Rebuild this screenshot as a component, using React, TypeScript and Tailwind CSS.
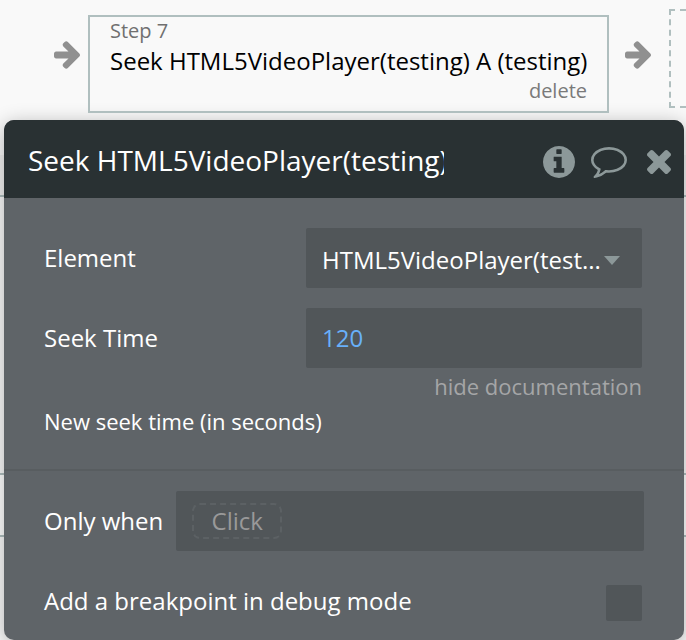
import { useState } from 'react';

const ICONS = {
  arrow: {
    box: '128 181 1472 1558',
    d: 'M1600 960q0 54-37 91l-651 651q-39 37-91 37-51 0-90-37l-75-75q-38-38-38-91t38-91l293-293h-704q-52 0-84.5-37.5t-32.5-90.5v-128q0-53 32.5-90.5t84.5-37.5h704l-293-294q-38-36-38-90t38-90l75-75q38-38 90-38 53 0 91 38l651 651q37 35 37 90z',
  },
  info: {
    box: '128 128 1536 1536',
    d: 'M1152 1376v-160q0-14-9-23t-23-9h-96v-512q0-14-9-23t-23-9h-320q-14 0-23 9t-9 23v160q0 14 9 23t23 9h96v320h-96q-14 0-23 9t-9 23v160q0 14 9 23t23 9h448q14 0 23-9t9-23zm-128-896v-160q0-14-9-23t-23-9h-192q-14 0-23 9t-9 23v160q0 14 9 23t23 9h192q14 0 23-9t9-23zm640 416q0 209-103 385.5t-279.5 279.5-385.5 103-385.5-103-279.5-279.5-103-385.5 103-385.5 279.5-279.5 385.5-103 385.5 103 279.5 279.5 103 385.5z',
  },
  comment: {
    box: '0 256 1792 1536',
    d: 'M896 384q-204 0-381.5 69.5t-282 187.5-104.5 255q0 112 71.5 213.5t201.5 175.5l87 50-27 96q-24 91-70 172 152-63 275-171l43-38 57 6q69 8 130 8 204 0 381.5-69.5t282-187.5 104.5-255-104.5-255-282-187.5-381.5-69.5zm896 512q0 174-120 321.5t-326 233-450 85.5q-70 0-145-8-198 175-460 242-49 14-114 22h-5q-15 0-27-10.5t-16-27.5v-1q-3-4-.5-12t2-10 4.5-9.5l6-9 7-8.5 8-9q7-8 31-34.5t34.5-38 31-39.5 32.5-51 27-59 26-76q-157-89-247.5-220t-90.5-281q0-174 120-321.5t326-233 450-85.5 450 85.5 326 233 120 321.5z',
  },
  close: {
    box: '302 366 1188 1188',
    d: 'M1490 1322q0 40-28 68l-136 136q-28 28-68 28t-68-28l-294-294-294 294q-28 28-68 28t-68-28l-136-136q-28-28-28-68t28-68l294-294-294-294q-28-28-28-68t28-68l136-136q28-28 68-28t68 28l294 294 294-294q28-28 68-28t68 28l136 136q28 28 28 68t-28 68l-294 294 294 294q28 28 28 68z',
  },
};

function Icon({ name, className }: { name: keyof typeof ICONS; className: string }) {
  return (
    <svg viewBox={ICONS[name].box} className={className} fill="currentColor" aria-hidden="true">
      <path d={ICONS[name].d} />
    </svg>
  );
}

export default function App() {
  const [seekTime, setSeekTime] = useState('120');
  const [condition, setCondition] = useState(false);
  const [breakpoint, setBreakpoint] = useState(false);

  return (
    <div className="relative min-h-screen overflow-hidden bg-[#f9f9f9] font-['Open_Sans',sans-serif]">
      {/* Canvas lines that run behind the editor */}
      <div className="absolute inset-x-0 top-[155px] h-[42px] border-b-2 border-[#b0bfbf] bg-[#f0f0f0]" />
      <div className="absolute inset-x-0 top-[473px] h-16 border-y-2 border-[#b0bfbf] bg-white" />

      <div className="relative">
        {/* Workflow steps */}
        <div className="flex h-[120px] items-start pt-[9px]">
          <Icon name="arrow" className="mt-8 ml-[54px] h-7 w-[26px] shrink-0 text-[#909090]" />
          <div className="mt-[6px] ml-2 flex h-[98px] min-w-0 grow flex-col border-2 border-[#b0bfbf] px-5">
            <span className="text-xl leading-7 text-[#707070]">Step 7</span>
            <span className="text-2xl leading-8 whitespace-nowrap text-black">Seek HTML5VideoPlayer(testing) A (testing)</span>
            <button className="self-end text-xl leading-7 text-[#7a7a7a]">delete</button>
          </div>
          <Icon name="arrow" className="mt-8 ml-4 h-7 w-[26px] shrink-0 text-[#909090]" />
          <div className="ml-[18px] h-[99px] w-[17px] shrink-0 border-2 border-r-0 border-dashed border-[#b0bfbf]" />
        </div>

        {/* Property editor */}
        <section className="mr-[2px] ml-1 overflow-hidden rounded-[10px] bg-[#5f6468] text-2xl text-white shadow-[0_4px_20px_rgba(0,0,0,0.3)]">
          <header className="flex h-[78px] items-center bg-[#293133] pr-[13px] pl-6 text-[#8c9899]">
            <h2 className="w-[416px] overflow-hidden pt-[2px] text-[28px] leading-10 whitespace-nowrap text-white">
              Seek HTML5VideoPlayer(testing)
            </h2>
            <div className="ml-auto flex items-center pt-[6px]">
              <button aria-label="Info">
                <Icon name="info" className="size-8" />
              </button>
              <button aria-label="Comment" className="ml-4">
                <Icon name="comment" className="h-[31px] w-9" />
              </button>
              <button aria-label="Close" className="ml-5">
                <Icon name="close" className="size-6" />
              </button>
            </div>
          </header>

          <div className="flex flex-col gap-5 pt-[30px] pr-[42px] pl-10">
            <div className="flex h-[60px] items-center">
              <label htmlFor="element" className="grow">Element</label>
              <div className="relative w-[336px]">
                <select
                  id="element"
                  className="h-[60px] w-full appearance-none truncate rounded-xs bg-[#515659] pt-1 pr-10 pl-4"
                >
                  <option>HTML5VideoPlayer(test...</option>
                </select>
                <svg viewBox="0 0 16 9" className="pointer-events-none absolute top-7 right-[22px] h-[9px] w-4 text-[#8c9899]" fill="currentColor">
                  <path d="M0 0h16L8 9z" />
                </svg>
              </div>
            </div>
            <div className="flex h-[60px] items-center">
              <label htmlFor="seek-time" className="grow">Seek Time</label>
              <input
                id="seek-time"
                type="text"
                value={seekTime}
                onChange={(e) => setSeekTime(e.target.value)}
                className="h-[60px] w-[336px] rounded-xs bg-[#515659] px-4 pb-[2px] text-[#68b0fa]"
              />
            </div>
          </div>

          <div className="flex flex-col pt-[2px] pr-[42px] pb-8 pl-10">
            <button className="self-end text-[22px] leading-8 text-[#a5a6a7]">hide documentation</button>
            <p className="mt-[3px] text-[22px] leading-8">New seek time (in seconds)</p>
          </div>

          <div className="border-t-2 border-[#585d60] pt-5 pr-10 pb-[19px] pl-10">
            <div className="flex items-center">
              <span className="shrink-0">Only when</span>
              <div className="ml-[13px] flex h-[60px] grow items-center rounded-xs bg-[#515659] pl-4">
                <button
                  onClick={() => setCondition(!condition)}
                  className="h-9 w-[90px] rounded-lg border-2 border-dashed border-[#5c6164] leading-8 text-[#999]"
                >
                  Click
                </button>
              </div>
            </div>
            <div className="mt-[34px] flex items-start pr-[2px]">
              <label htmlFor="breakpoint" className="grow leading-8">Add a breakpoint in debug mode</label>
              <input
                id="breakpoint"
                type="checkbox"
                checked={breakpoint}
                onChange={(e) => setBreakpoint(e.target.checked)}
                className="size-9 appearance-none rounded-xs bg-[#515659] checked:bg-[#68b0fa]"
              />
            </div>
          </div>
        </section>
      </div>
    </div>
  );
}
